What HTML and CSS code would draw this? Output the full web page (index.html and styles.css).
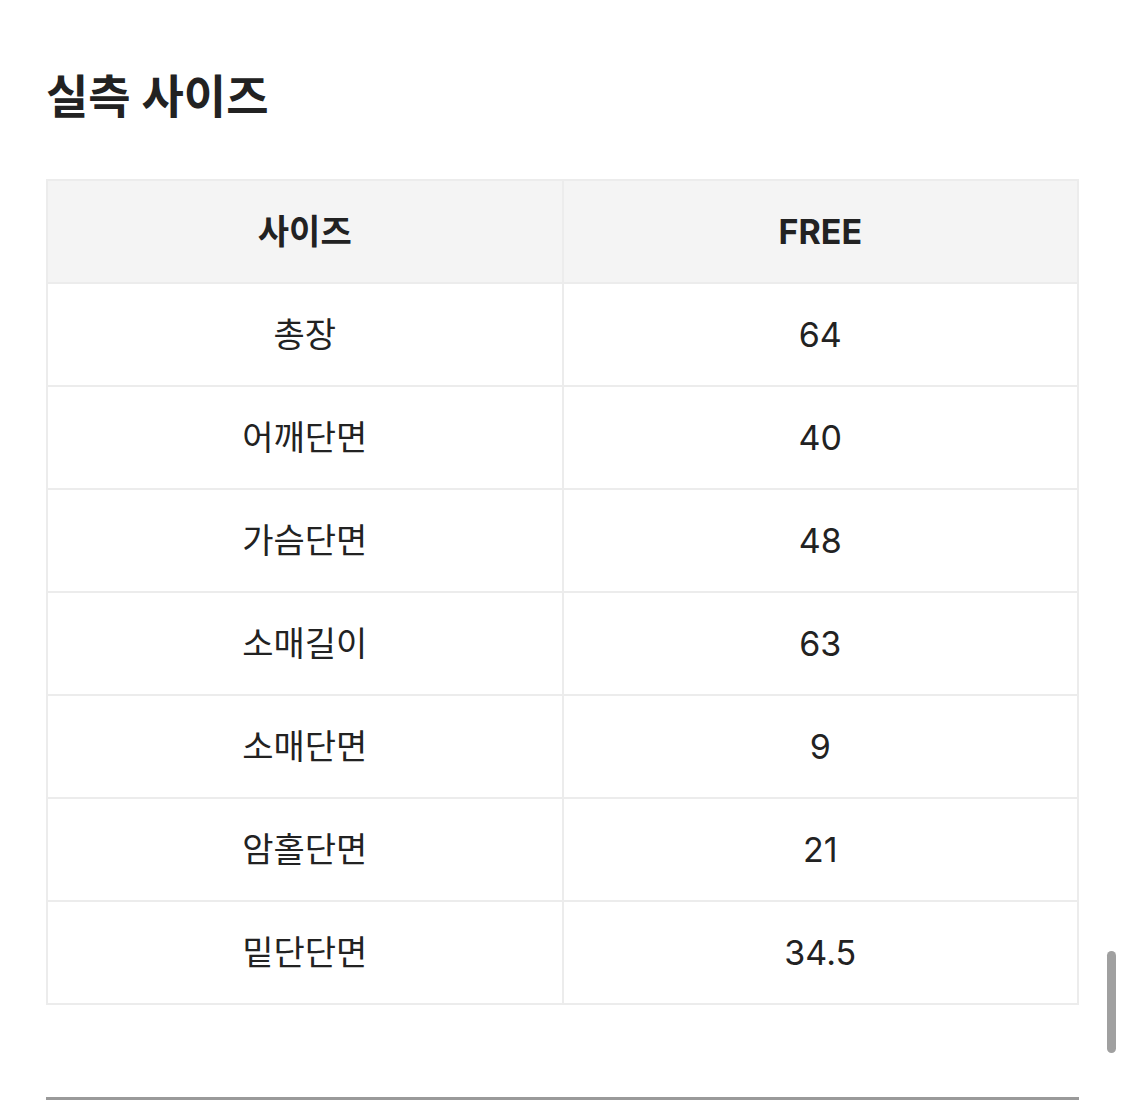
FILE: index.html
```html
<!DOCTYPE html>
<html lang="ko">
<head>
<meta charset="utf-8">
<link rel="stylesheet" href="styles.css">
</head>
<body>
<main class="page">
  <h2 class="title">실측 사이즈</h2>
  <table class="size-table">
    <thead>
      <tr><th>사이즈</th><th>FREE</th></tr>
    </thead>
    <tbody>
      <tr><td>총장</td><td>64</td></tr>
      <tr><td>어깨단면</td><td>40</td></tr>
      <tr><td>가슴단면</td><td>48</td></tr>
      <tr><td>소매길이</td><td>63</td></tr>
      <tr><td>소매단면</td><td>9</td></tr>
      <tr><td>암홀단면</td><td>21</td></tr>
      <tr><td>밑단단면</td><td>34.5</td></tr>
    </tbody>
  </table>
  <hr class="divider">
</main>
<div class="scrollbar"></div>
</body>
</html>
```
FILE: styles.css
```css
html, body {
  margin: 0;
  padding: 0;
  background: #fff;
}
body {
  font-family: "Inter", "Noto Sans CJK KR", "Noto Sans", sans-serif;
  color: #222;
  overflow: hidden;
  height: 1100px;
}
.page {
  padding: 0 46px;
}
.title {
  margin: 0 0 53px;
  padding-top: 66px;
  font-size: 46px;
  font-weight: 700;
  line-height: 60px;
  color: #222;
}
.size-table {
  width: 100%;
  border-collapse: collapse;
  border: 2px solid #ececec;
}
.size-table th,
.size-table td {
  border: 2px solid #ececec;
  height: 101px;
  padding: 0;
  text-align: center;
  vertical-align: middle;
  width: 50%;
  font-size: 34px;
  line-height: 40px;
}
.size-table th {
  background: #f4f4f4;
  font-weight: 700;
}
.size-table td {
  font-weight: 400;
}
.divider {
  margin: 92px 0 0;
  border: 0;
  height: 3px;
  background: #9a9a9a;
}
.scrollbar {
  position: absolute;
  left: 1107px;
  top: 951px;
  width: 9px;
  height: 102px;
  border-radius: 5px;
  background: #a0a0a0;
}
```
